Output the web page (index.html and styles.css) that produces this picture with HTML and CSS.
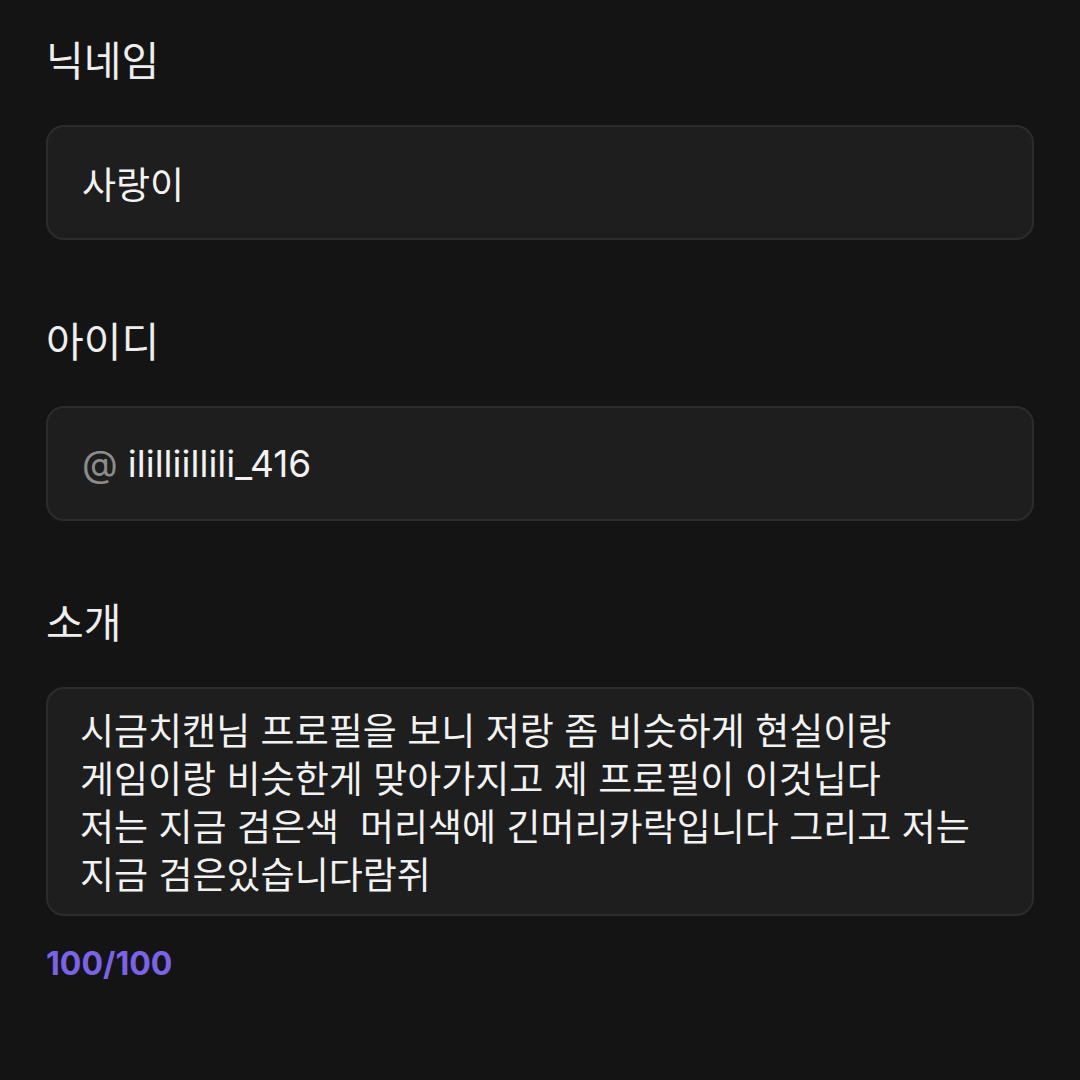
FILE: index.html
```html
<!DOCTYPE html>
<html lang="ko">
<head>
    <meta charset="UTF-8">
    <meta name="viewport" content="width=device-width, initial-scale=1.0">
    <title>프로필 편집</title>
    <link rel="stylesheet" href="styles.css">
</head>
<body>
    <div class="form">
        <div class="field">
            <label class="field-label" for="nickname">닉네임</label>
            <div class="input-box" id="nickname">사랑이</div>
        </div>

        <div class="field">
            <label class="field-label" for="userid">아이디</label>
            <div class="input-box" id="userid">
                <span class="at">@</span>
                <span class="id-text">ililliillili_416</span>
            </div>
        </div>

        <div class="field">
            <label class="field-label" for="bio">소개</label>
            <div class="input-box textarea" id="bio">시금치캔님 프로필을 보니 저랑 좀 비슷하게 현실이랑
게임이랑 비슷한게 맞아가지고 제 프로필이 이것닙다
저는 지금 검은색  머리색에 긴머리카락입니다 그리고 저는
지금 검은있습니다람쥐</div>
            <p class="counter">100/100</p>
        </div>
    </div>
</body>
</html>
```

FILE: styles.css
```css
body {
    margin: 0;
    padding: 0;
    background-color: #141414;
    font-family: Inter, "Noto Sans CJK KR", sans-serif;
    color: #f2f2f2;
}

.form {
    padding: 36px 46px 0 46px;
}

.field {
    margin-bottom: 77px;
}

.field-label {
    display: block;
    font-size: 41px;
    line-height: 50px;
    color: #eeeeee;
    margin-bottom: 39px;
}

.input-box {
    display: flex;
    align-items: center;
    height: 111px;
    padding: 0 34px;
    background-color: #1e1e1e;
    border: 2px solid #2c2c2c;
    border-radius: 18px;
    font-size: 37px;
}

.at {
    color: #8c8c8c;
    margin-right: 10px;
}

.textarea {
    display: block;
    height: auto;
    padding: 19px 32px 14px 32px;
    line-height: 48px;
    white-space: pre-wrap;
}

.counter {
    margin: 28px 0 0 0;
    font-size: 32px;
    line-height: 40px;
    font-weight: 700;
    color: #7b63e8;
}
```
